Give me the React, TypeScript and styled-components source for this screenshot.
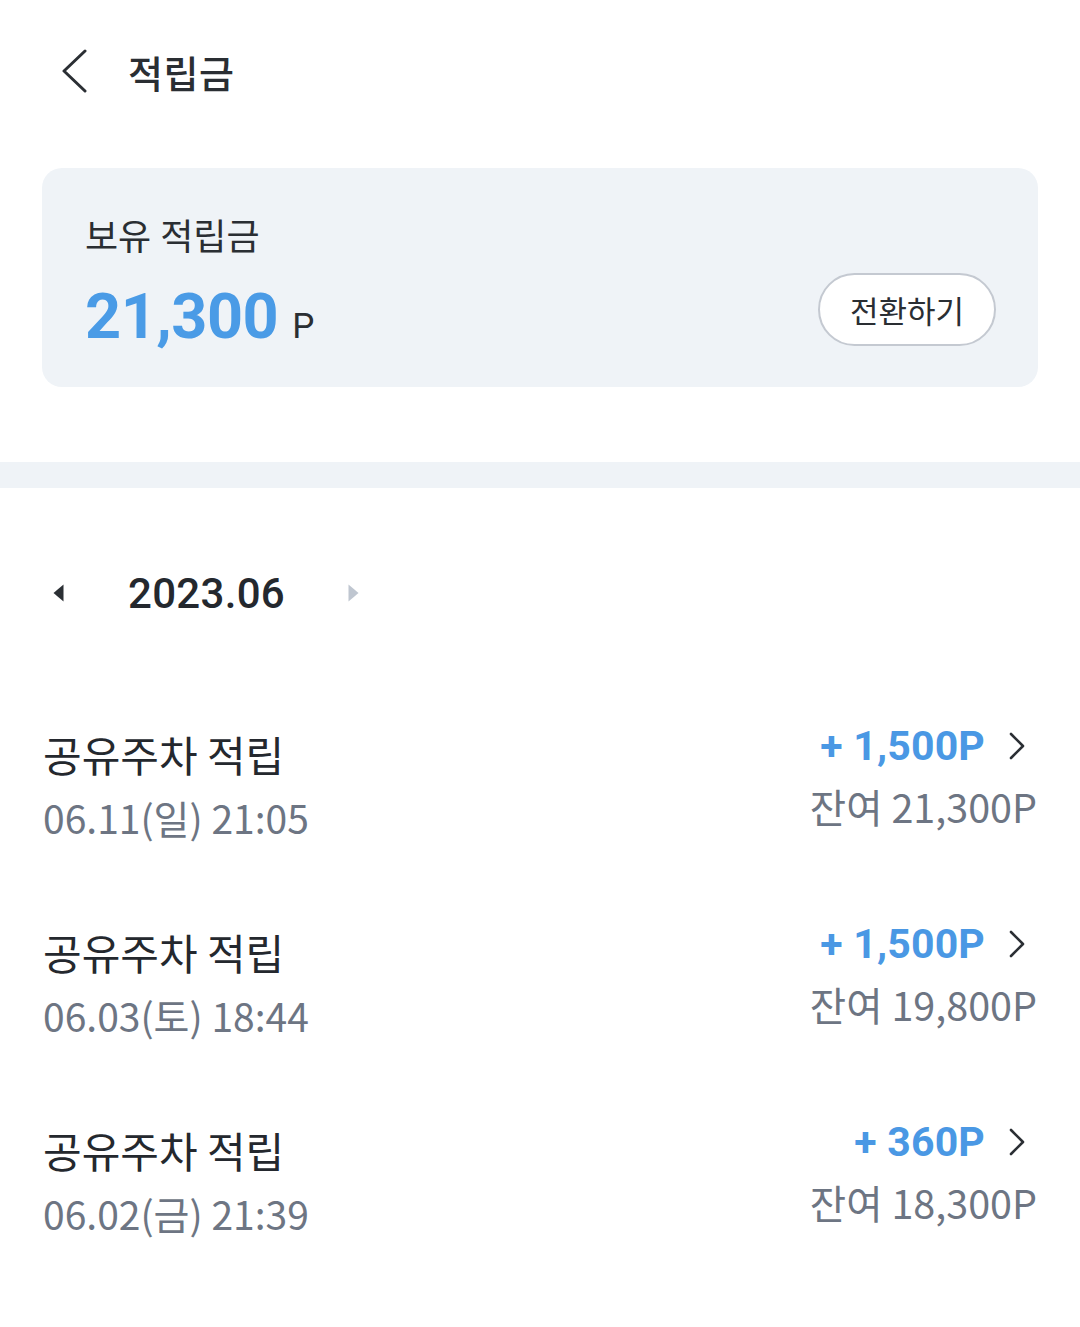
import React from 'react';
import styled, { createGlobalStyle } from 'styled-components';

const GlobalStyle = createGlobalStyle`
  html, body {
    margin: 0;
    padding: 0;
    background: #ffffff;
  }
  body {
    font-family: Roboto, "Noto Sans CJK KR", "Noto Sans", sans-serif;
    color: #24282e;
  }
  * { box-sizing: border-box; }
`;

const Page = styled.div`
  width: 1080px;
  min-height: 1327px;
  background: #ffffff;
`;

/* ── 상단 헤더 ── */
const Header = styled.header`
  height: 144px;
  display: flex;
  align-items: center;
  padding: 0 0 2px 56px;
  gap: 38px;
`;

const BackButton = styled.button`
  background: none;
  border: none;
  padding: 0;
  width: 34px;
  height: 44px;
  display: flex;
  align-items: center;
  justify-content: center;
  color: #2b2f34;
  cursor: pointer;
`;

const Title = styled.h1`
  margin: 0;
  font-size: 38px;
  font-weight: 500;
  color: #2a2e33;
  letter-spacing: 0.5px;
`;

/* ── 보유 적립금 카드 ── */
const BalanceCard = styled.section`
  margin: 24px 42px 0 42px;
  height: 219px;
  background: #eff3f7;
  border-radius: 20px;
  padding: 46px 42px 41px 43px;
  display: flex;
  justify-content: space-between;
  align-items: flex-end;
`;

const BalanceInfo = styled.div`
  align-self: flex-start;
  display: flex;
  flex-direction: column;
  gap: 19px;
`;

const BalanceLabel = styled.div`
  font-size: 36px;
  font-weight: 400;
  color: #2a2e33;
  line-height: 48px;
`;

const BalanceAmount = styled.div`
  display: flex;
  align-items: baseline;
  gap: 14px;
  line-height: 72px;
`;

const AmountValue = styled.span`
  font-size: 63px;
  font-weight: 700;
  color: #4a9be6;
  letter-spacing: -0.5px;
`;

const AmountUnit = styled.span`
  font-size: 35px;
  color: #2a2e33;
`;

const ConvertButton = styled.button`
  height: 73px;
  width: 178px;
  border: 2px solid #c4c9d1;
  border-radius: 37px;
  background: #ffffff;
  font-family: "Noto Sans CJK KR", Roboto, sans-serif;
  font-size: 31px;
  color: #2a2e33;
  cursor: pointer;
`;

const SectionGap = styled.div`
  height: 26px;
  background: #eff3f7;
  margin-top: 75px;
`;

/* ── 월 선택 ── */
const MonthNav = styled.div`
  display: flex;
  align-items: center;
  padding: 0 0 0 52px;
  margin-top: 80px;
  height: 50px;
`;

const ArrowButton = styled.button<{ $disabled?: boolean }>`
  background: none;
  border: none;
  padding: 0;
  width: 12px;
  height: 20px;
  display: flex;
  align-items: center;
  justify-content: center;
  color: ${p => (p.$disabled ? '#bfc6d0' : '#2b2f34')};
  cursor: pointer;
`;

const MonthLabel = styled.div`
  font-size: 42px;
  font-weight: 500;
  color: #24282e;
  margin: 0 62px 0 64px;
  letter-spacing: 0.3px;
`;

/* ── 적립 내역 ── */
const HistoryList = styled.ul`
  list-style: none;
  margin: 109px 0 0 0;
  padding: 0 43px;
  display: flex;
  flex-direction: column;
  gap: 82px;
`;

const HistoryRow = styled.li`
  display: flex;
  justify-content: space-between;
  align-items: flex-start;
  height: 116px;
`;

const RowLeft = styled.div`
  display: flex;
  flex-direction: column;
  gap: 9px;
`;

const RowTitle = styled.div`
  font-family: "Noto Sans CJK KR", sans-serif;
  font-size: 42px;
  color: #24282e;
  line-height: 54px;
`;

const RowDate = styled.div`
  font-family: "Noto Sans CJK KR", sans-serif;
  font-size: 39px;
  color: #6d7583;
  line-height: 54px;
`;

const RowRight = styled.div`
  display: flex;
  flex-direction: column;
  align-items: flex-end;
  gap: 6px;
  margin-top: -8px;
`;

const PointLine = styled.div`
  display: flex;
  align-items: center;
  gap: 24px;
  padding-right: 12px;
  height: 54px;
`;

const PointValue = styled.span`
  font-size: 41px;
  font-weight: 700;
  color: #4a98e4;
  letter-spacing: 0.2px;
`;

const RemainLine = styled.div`
  font-family: "Noto Sans CJK KR", sans-serif;
  font-size: 39.5px;
  color: #6d7583;
  line-height: 54px;
`;

const items = [
  { title: '공유주차 적립', date: '06.11(일) 21:05', point: '1,500P', remain: '21,300P' },
  { title: '공유주차 적립', date: '06.03(토) 18:44', point: '1,500P', remain: '19,800P' },
  { title: '공유주차 적립', date: '06.02(금) 21:39', point: '360P', remain: '18,300P' },
];

const ChevronRight = () => (
  <svg width="16" height="28" viewBox="0 0 16 28" fill="none">
    <path d="M2 2l12 12L2 26" stroke="#2b2f34" strokeWidth="2.6" strokeLinecap="round" strokeLinejoin="round" />
  </svg>
);

export default function App() {
  return (
    <Page>
      <GlobalStyle />
      <Header>
        <BackButton aria-label="뒤로">
          <svg width="30" height="44" viewBox="0 0 30 44" fill="none">
            <path d="M27 2L6 22l21 20" stroke="#2b2f34" strokeWidth="3" strokeLinecap="round" strokeLinejoin="round" />
          </svg>
        </BackButton>
        <Title>적립금</Title>
      </Header>

      <BalanceCard>
        <BalanceInfo>
          <BalanceLabel>보유 적립금</BalanceLabel>
          <BalanceAmount>
            <AmountValue>21,300</AmountValue>
            <AmountUnit>P</AmountUnit>
          </BalanceAmount>
        </BalanceInfo>
        <ConvertButton>전환하기</ConvertButton>
      </BalanceCard>

      <SectionGap />

      <MonthNav>
        <ArrowButton aria-label="이전 달">
          <svg width="11" height="18" viewBox="0 0 11 18">
            <path d="M10.5 0.5v17L0.5 9z" fill="currentColor" />
          </svg>
        </ArrowButton>
        <MonthLabel>2023.06</MonthLabel>
        <ArrowButton $disabled aria-label="다음 달">
          <svg width="11" height="18" viewBox="0 0 11 18">
            <path d="M0.5 0.5v17l10-8.5z" fill="currentColor" />
          </svg>
        </ArrowButton>
      </MonthNav>

      <HistoryList>
        {items.map((it, i) => (
          <HistoryRow key={i}>
            <RowLeft>
              <RowTitle>{it.title}</RowTitle>
              <RowDate>{it.date}</RowDate>
            </RowLeft>
            <RowRight>
              <PointLine>
                <PointValue>+ {it.point}</PointValue>
                <ChevronRight />
              </PointLine>
              <RemainLine>잔여 {it.remain}</RemainLine>
            </RowRight>
          </HistoryRow>
        ))}
      </HistoryList>
    </Page>
  );
}
